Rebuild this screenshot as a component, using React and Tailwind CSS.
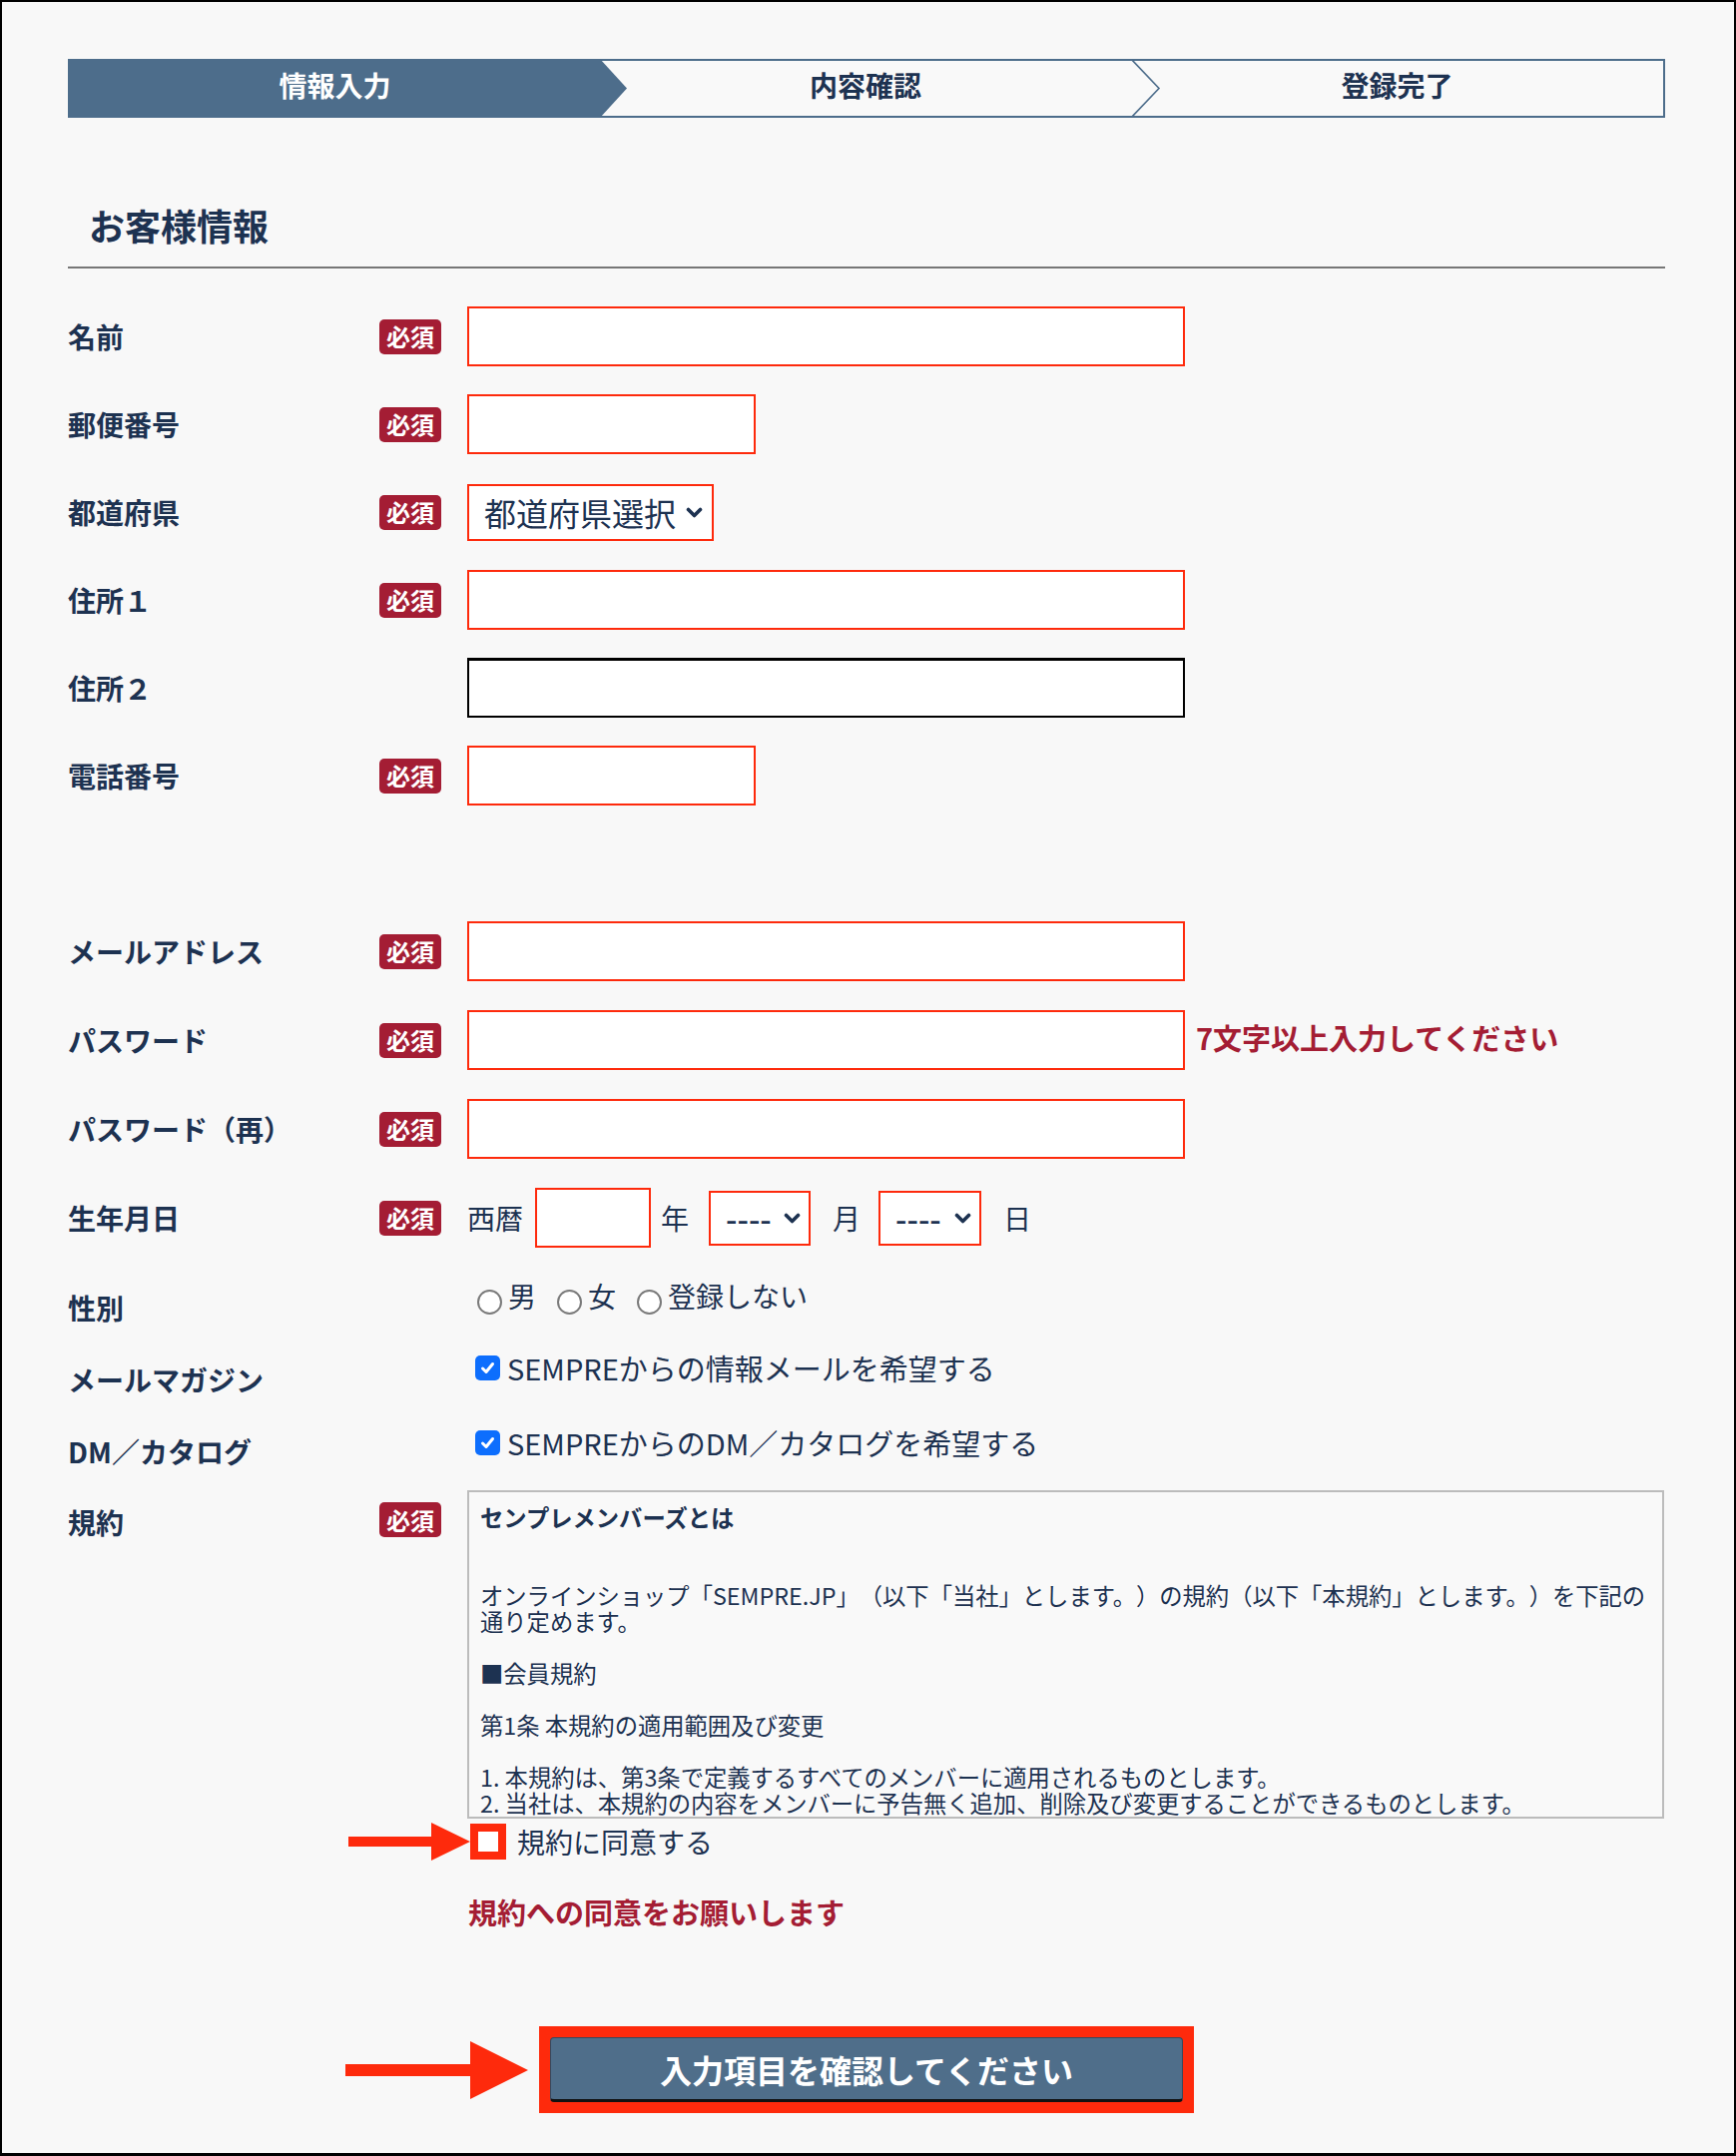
import React from "react";

function Badge() {
  return (
    <span className="flex h-[35px] w-[62px] items-center justify-center rounded-[5px] bg-[#a41d34] text-[24px] font-bold leading-none text-white">
      必須
    </span>
  );
}

function Chevron() {
  return (
    <svg width="17" height="11" viewBox="0 0 17 11" className="shrink-0">
      <path d="M2.5 2.5 L8.5 8.5 L14.5 2.5" fill="none" stroke="#1d3251" strokeWidth="3.6" strokeLinecap="round" strokeLinejoin="round" />
    </svg>
  );
}

function RowA({ label, required = true, children, className = "" }) {
  return (
    <div className={"flex h-[60px] items-center " + className}>
      <div className="w-[312px] text-[28px] font-bold leading-[40px] text-[#1d3251]">{label}</div>
      <div className="flex w-[62px] items-center">{required && <Badge />}</div>
      <div className="ml-[26px] flex items-center">{children}</div>
    </div>
  );
}

function RedInput({ w }) {
  return <input type="text" className={"h-[60px] border-2 border-[#fe2a0c] bg-white outline-none " + w} />;
}

function Radio({ label, first }) {
  return (
    <div className={"flex items-center " + (first ? "ml-[10px]" : "ml-[21px]")}>
      <span className="mt-[13px] block h-[25px] w-[25px] rounded-full border-2 border-[#7a7a7a] bg-white" />
      <span className="ml-[6px] text-[28px] leading-[40px] text-[#1d3251]">{label}</span>
    </div>
  );
}

function CheckBox() {
  return (
    <span className="ml-[8px] flex h-[25px] w-[25px] shrink-0 items-center justify-center rounded-[5px] bg-[#0d6efd]">
      <svg width="17" height="17" viewBox="0 0 17 17">
        <path d="M3.5 9 L7 12.5 L13.5 4.5" fill="none" stroke="#fff" strokeWidth="3" strokeLinecap="round" strokeLinejoin="round" />
      </svg>
    </span>
  );
}

export default function App() {
  return (
    <div className="h-[2160px] w-[1739px] overflow-hidden border-2 border-b-[3px] border-black bg-[#f8f8f8] font-['Noto_Sans_CJK_JP','Noto_Sans',sans-serif] text-[#1d3251]">
      <div className="ml-[66px] w-[1600px] pt-[57px]">
        {/* Step bar */}
        <div className="relative flex h-[59px] w-[1600px] border-2 border-[#4d6d8b] bg-[#f9f9f9]">
          <div className="relative flex w-[531px] items-center justify-center bg-[#4d6d8b] pb-[7px] text-[28px] font-bold text-white">
            情報入力
            <svg className="absolute left-full top-[-2px] z-10" width="27" height="59" viewBox="0 0 27 59">
              <polygon points="0,0 27,29.5 0,59" fill="#4d6d8b" />
            </svg>
          </div>
          <div className="flex w-[532px] items-center justify-center pb-[7px] text-[28px] font-bold text-[#1d3251]">内容確認</div>
          <div className="relative flex flex-1 items-center justify-center pb-[7px] text-[28px] font-bold text-[#1d3251]">
            <svg className="absolute left-0 top-[-2px]" width="30" height="59" viewBox="0 0 30 59">
              <polyline points="0,0 28,29.5 0,59" fill="none" stroke="#4d6d8b" strokeWidth="1.6" />
            </svg>
            登録完了
          </div>
        </div>

        {/* Heading */}
        <h2 className="mt-[80px] border-b-2 border-[#777777] pb-[15px] pl-[21px] text-[36px] font-bold leading-[54px] text-[#1d3251]">
          お客様情報
        </h2>

        {/* Form */}
        <div className="mt-[38px]">
          <RowA label="名前" className="mb-[28px]">
            <RedInput w="w-[719px]" />
          </RowA>
          <RowA label="郵便番号" className="mb-[28px]">
            <RedInput w="w-[289px]" />
          </RowA>
          <RowA label="都道府県" className="mb-[28px]">
            <div className="flex h-[57px] w-[247px] items-center justify-between border-2 border-[#fe2a0c] bg-white pl-[15px] pr-[9px]">
              <span className="text-[32px] leading-none text-[#1d3251]">都道府県選択</span>
              <Chevron />
            </div>
          </RowA>
          <RowA label="住所１" className="mb-[28px]">
            <RedInput w="w-[719px]" />
          </RowA>
          <RowA label="住所２" required={false} className="mb-[28px]">
            <input type="text" className="h-[60px] w-[719px] border-2 border-t-[3px] border-black bg-white outline-none" />
          </RowA>
          <RowA label="電話番号" className="mb-[28px]">
            <RedInput w="w-[289px]" />
          </RowA>

          <RowA label="メールアドレス" className="mb-[29px] mt-[116px]">
            <RedInput w="w-[719px]" />
          </RowA>
          <RowA label="パスワード" className="mb-[29px]">
            <RedInput w="w-[719px]" />
            <span className="relative top-[-3px] ml-[11px] text-[29px] font-bold leading-[40px] text-[#a41d34]">7文字以上入力してください</span>
          </RowA>
          <RowA label="パスワード（再）" className="mb-[29px]">
            <RedInput w="w-[719px]" />
          </RowA>
          <RowA label="生年月日" className="mb-[28px]">
            <span className="text-[28px] leading-[40px]">西暦</span>
            <input type="text" className="ml-[12px] h-[60px] w-[116px] border-2 border-[#fe2a0c] bg-white outline-none" />
            <span className="ml-[10px] text-[28px] leading-[40px]">年</span>
            <div className="ml-[20px] flex h-[55px] w-[102px] items-center justify-between border-2 border-[#fe2a0c] bg-white pl-[15px] pr-[8px]">
              <span className="text-[32px] font-medium leading-none">----</span>
              <Chevron />
            </div>
            <span className="ml-[22px] text-[28px] leading-[40px]">月</span>
            <div className="ml-[18px] flex h-[55px] w-[103px] items-center justify-between border-2 border-[#fe2a0c] bg-white pl-[15px] pr-[8px]">
              <span className="text-[32px] font-medium leading-none">----</span>
              <Chevron />
            </div>
            <span className="ml-[22px] text-[28px] leading-[40px]">日</span>
          </RowA>

          {/* Gender */}
          <div className="flex h-[72px] items-start">
            <div className="mt-[12px] w-[312px] text-[28px] font-bold leading-[40px]">性別</div>
            <div className="w-[62px]" />
            <div className="ml-[26px] flex h-[40px] items-center">
              <Radio label="男" first />
              <Radio label="女" />
              <Radio label="登録しない" />
            </div>
          </div>

          {/* Mail magazine */}
          <div className="flex h-[72px] items-start">
            <div className="mt-[12px] w-[312px] text-[28px] font-bold leading-[40px]">メールマガジン</div>
            <div className="w-[62px]" />
            <div className="ml-[26px] flex h-[40px] items-center">
              <CheckBox />
              <span className="ml-[7px] text-[29px] leading-[40px]">SEMPREからの情報メールを希望する</span>
            </div>
          </div>

          {/* DM */}
          <div className="flex h-[71px] items-start">
            <div className="mt-[12px] w-[312px] text-[28px] font-bold leading-[40px]">DM／カタログ</div>
            <div className="w-[62px]" />
            <div className="ml-[26px] mt-[3px] flex h-[40px] items-center">
              <CheckBox />
              <span className="ml-[7px] text-[29px] leading-[40px]">SEMPREからのDM／カタログを希望する</span>
            </div>
          </div>

          {/* Terms */}
          <div className="flex items-start">
            <div className="mt-[12px] w-[312px] text-[28px] font-bold leading-[40px]">規約</div>
            <div className="mt-[12px] w-[62px]">
              <Badge />
            </div>
            <div className="ml-[26px] h-[329px] w-[1199px] overflow-hidden border-2 border-[#bcbcbc] bg-[#f9f9f9] pl-[11px] pr-[4px] pt-[12px] text-[23.3px] leading-[26px] text-[#1d3251] [text-spacing-trim:space-all]">
              <div className="font-bold">センプレメンバーズとは</div>
              <div className="h-[26px]" />
              <div className="h-[26px]" />
              <div className="whitespace-nowrap">オンラインショップ「SEMPRE.JP」（以下「当社」とします。）の規約（以下「本規約」とします。）を下記の</div>
              <div>通り定めます。</div>
              <div className="h-[26px]" />
              <div>■会員規約</div>
              <div className="h-[26px]" />
              <div>第1条 本規約の適用範囲及び変更</div>
              <div className="h-[26px]" />
              <div>1. 本規約は、第3条で定義するすべてのメンバーに適用されるものとします。</div>
              <div>2. 当社は、本規約の内容をメンバーに予告無く追加、削除及び変更することができるものとします。</div>
            </div>
          </div>

          {/* Agree */}
          <div className="relative ml-[403px] mt-[5px] flex h-[36px] items-center">
            <svg className="absolute left-[-122px] top-1/2 -translate-y-1/2" width="122" height="38" viewBox="0 0 122 38">
              <rect x="0" y="14" width="84" height="10" fill="#fe2a0c" />
              <polygon points="83,0 122,19 83,38" fill="#fe2a0c" />
            </svg>
            <span className="block h-[36px] w-[36px] border-[8px] border-[#fe2a0c] bg-white" />
            <span className="ml-[11px] text-[28px] leading-[36px] text-[#1d3251]">規約に同意する</span>
          </div>

          <div className="ml-[401px] mt-[32px] text-[29px] font-bold leading-[40px] text-[#a41d34]">規約への同意をお願いします</div>

          {/* Submit */}
          <div className="mt-[95px] flex justify-center">
            <div className="relative bg-[#fe2a0c] p-[11px]">
              <svg className="absolute left-[-194px] top-1/2 -translate-y-1/2" width="183" height="58" viewBox="0 0 183 58">
                <rect x="0" y="23" width="126" height="12" fill="#fe2a0c" />
                <polygon points="125,0 183,29 125,58" fill="#fe2a0c" />
              </svg>
              <button className="flex h-[65px] w-[634px] items-center justify-center rounded-[4px] border border-b-[3px] border-[#33495e] border-b-[#111111] bg-[#4f6e8a] text-[32px] font-bold text-white">
                入力項目を確認してください
              </button>
            </div>
          </div>
        </div>
      </div>
    </div>
  );
}
